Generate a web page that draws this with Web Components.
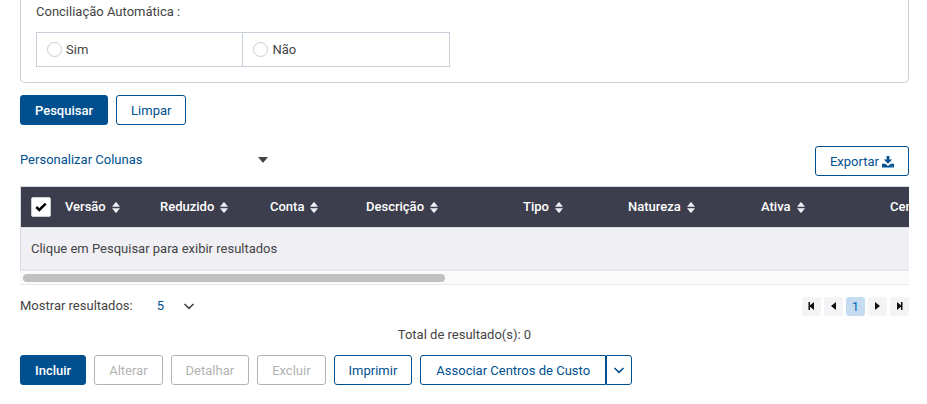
<!DOCTYPE html>
<html lang="pt-BR">
<head>
<meta charset="utf-8">
<title>Plano de Contas</title>
<style>
  body { margin: 0; background: #fff; color: #444; font: 13px/20px Roboto, "Noto Sans", sans-serif;
    --blue: #00508f; --line: #c9cfd9; --muted: #b3b3b3; }
</style>
</head>
<body>
<account-page></account-page>
<script>
const define = (name, html, setup) => {
  const tpl = document.createElement('template');
  tpl.innerHTML = '<style>*{box-sizing:border-box}</style>' + html;
  customElements.define(name, class extends HTMLElement {
    constructor() {
      super();
      this.attachShadow({ mode: 'open' }).append(tpl.content.cloneNode(true));
    }
    connectedCallback() { if (setup) setup(this, this.shadowRoot); }
  });
};

define('action-button', `
<style>
  :host { display: inline-flex; }
  button { height: 30px; padding: 2px 14px 0; border: 1px solid var(--blue); border-radius: 3px; background: #fff;
    color: var(--blue); font: inherit; display: flex; align-items: center; gap: 3px; white-space: nowrap; cursor: pointer; }
  :host([primary]) button { background: var(--blue); color: #fff; font-weight: 500; }
  :host([group=start]) button { border-radius: 3px 0 0 3px; padding: 2px 15px 0; }
  :host([group=end]) button { border-radius: 0 3px 3px 0; padding: 0 6px; }
  button:disabled { border-color: var(--muted); color: var(--muted); cursor: default; }
</style>
<button type="button"><slot></slot></button>`, (el, root) => {
  const b = root.querySelector('button');
  b.disabled = el.hasAttribute('disabled');
  if (el.hasAttribute('label')) b.setAttribute('aria-label', el.getAttribute('label'));
});

define('radio-option', `
<style>
  :host { display: block; flex: 1; }
  :host(:not(:first-child)) { border-left: 1px solid var(--line); }
  label { display: flex; align-items: center; gap: 4px; height: 33px; padding: 0 10px; cursor: pointer; }
  input { appearance: none; width: 15px; height: 15px; margin: 0; border: 1px solid #ccc; border-radius: 50%; background: #fff; }
  input:checked { border: 4px solid var(--blue); }
</style>
<label><input type="radio" name="conciliacao"><slot></slot></label>`);

define('drop-select', `
<style>
  :host { display: inline-grid; grid-template: 30px / 1fr; align-items: center; }
  select, svg { grid-area: 1 / 1; }
  select { appearance: none; border: 0; padding: 0; margin: 0; width: 100%; height: 30px; background: none; color: var(--blue); font: inherit; cursor: pointer; }
  svg { justify-self: end; pointer-events: none; display: none; }
  :host([icon=caret]) .caret, :host([icon=chevron]) .chevron { display: block; }
</style>
<select></select>
<svg class="caret" width="10" height="6" viewBox="0 0 10 6"><path d="M0 0h10L5.600 5.300q-.6.600-1.200 0z" fill="#444"/></svg>
<svg class="chevron" width="12" height="7" viewBox="0 0 12 7"><path d="M1.500 1 6 5.400 10.500 1" fill="none" stroke="#444" stroke-width="1.600"/></svg>`,
(el, root) => {
  const s = root.querySelector('select');
  s.setAttribute('aria-label', el.getAttribute('label'));
  s.replaceChildren(new Option(el.getAttribute('value')));
});

define('search-panel', `
<style>
  :host { display: block; }
  fieldset { margin: 0; min-width: 0; border: 1px solid var(--line); border-top: 0; border-radius: 0 0 5px 5px; padding: 2px 15px 15px; }
  .group { display: flex; width: 48.300%; margin-top: 10px; border: 1px solid var(--line); }
</style>
<fieldset aria-labelledby="name">
  <div id="name">Conciliação Automática :</div>
  <div class="group"><radio-option>Sim</radio-option><radio-option>Não</radio-option></div>
</fieldset>`);

define('sort-header', `
<style>
  :host { display: block; }
  button { display: flex; align-items: center; gap: 6px; border: 0; padding: 0; background: none; color: #fff; font: inherit; font-weight: 500; white-space: nowrap; cursor: pointer; }
</style>
<button type="button"><slot></slot><svg width="8" height="11" viewBox="0 0 8 11" fill="#eeeef4"><path d="M0 4.700 3.400.600q.6-.6 1.200 0L8 4.700zM0 6.300h8L4.600 10.400q-.6.600-1.200 0z"/></svg></button>`);

define('result-table', `
<style>
  :host { display: block; }
  .view { overflow: hidden; border: 1px solid #d9dbe2; border-width: 1px 0 0 1px; }
  table { width: 1864px; table-layout: fixed; border-collapse: separate; border-spacing: 0; }
  th { height: 40px; padding: 0 0 0 10px; background: #3c3e4e; text-align: left; }
  td { height: 44px; padding: 0 10px; background: #f0eff4; border-top: 1px solid #d9dbe2; border-bottom: 2px solid #e7e7eb; }
  label { display: grid; width: 20px; height: 20px; place-items: center; }
  input, label svg { grid-area: 1 / 1; }
  input { appearance: none; width: 20px; height: 20px; margin: 0; border: 1px solid #ccc; border-radius: 2px; background: #fff; }
  label svg { pointer-events: none; visibility: hidden; z-index: 1; }
  input:checked + svg { visibility: visible; }
  .track { height: 14px; padding: 3px; background: #fafafa; border-bottom: 1px solid #e8e8e8; }
  .thumb { width: 47.800%; height: 8px; border-radius: 4px; background: #c1c1c1; }
</style>
<div class="view"><table>
  <colgroup></colgroup>
  <thead><tr><th scope="col"><label><input type="checkbox" checked aria-label="Selecionar todos"><svg width="12" height="10" viewBox="0 0 12 10"><path d="m1.300 5 3 3 6.400-6.400" fill="none" stroke="#000" stroke-width="2.500"/></svg></label></th></tr></thead>
  <tbody><tr><td colspan="9">Clique em Pesquisar para exibir resultados</td></tr></tbody>
</table></div>
<div class="track"><div class="thumb"></div></div>`, (el, root) => {
  const columns = [['Versão', 95], ['Reduzido', 110], ['Conta', 96], ['Descrição', 157], ['Tipo', 105], ['Natureza', 133], ['Ativa', 129], ['Centro de Custo', 1005]];
  const row = root.querySelector('thead tr'), group = root.querySelector('colgroup');
  const addCol = w => { const c = document.createElement('col'); c.style.width = w + 'px'; group.append(c); };
  addCol(34);
  for (const [name, width] of columns) {
    addCol(width);
    const th = document.createElement('th'), sort = document.createElement('sort-header');
    th.scope = 'col'; sort.textContent = name; th.append(sort); row.append(th);
  }
});

define('page-nav', `
<style>
  :host { display: block; }
  nav { display: flex; gap: 3px; }
  button { width: 19px; height: 19px; padding: 0; border: 0; border-radius: 3px; background: #f4f4f6; color: #111; font: inherit; line-height: 19px; display: grid; place-items: center; cursor: pointer; }
  button[aria-current] { background: #c5dcf0; color: #0068b4; }
  svg { fill: currentColor; }
</style>
<nav aria-label="Paginação">
  <button type="button" aria-label="Primeira"><svg width="7" height="8" viewBox="0 0 7 8"><path d="M0.500 0h1.500v3.300L6 0v8L2 4.700V8H.5z"/></svg></button>
  <button type="button" aria-label="Anterior"><svg width="7" height="8" viewBox="0 0 7 8"><path d="M6 0v8L1 4z"/></svg></button>
  <button type="button" aria-current="page">1</button>
  <button type="button" aria-label="Próxima"><svg width="7" height="8" viewBox="0 0 7 8"><path d="M1 0v8l5-4z"/></svg></button>
  <button type="button" aria-label="Última"><svg width="7" height="8" viewBox="0 0 7 8"><path d="M6.500 0H5v3.300L1 0v8L5 4.700V8h1.500z"/></svg></button>
</nav>`);

define('account-page', `
<style>
  :host { display: block; padding: 0 18px 0 20px; }
  .row { display: flex; align-items: center; gap: 8px; }
  .search { margin-top: 12px; }
  .tools { margin-top: 20px; justify-content: space-between; align-items: flex-end; }
  result-table { margin-top: 10px; }
  .columns { width: 248px; padding-bottom: 1px; }
  .pager { margin-top: 6px; justify-content: space-between; }
  .size { display: flex; align-items: center; gap: 24px; }
  .size drop-select { width: 38px; }
  .total { text-align: center; margin-top: 4px; }
  .actions { margin-top: 10px; }
  .split { display: flex; }
</style>
<search-panel></search-panel>
<div class="row search"><action-button primary>Pesquisar</action-button><action-button>Limpar</action-button></div>
<div class="row tools">
  <drop-select class="columns" icon="caret" label="Colunas" value="Personalizar Colunas"></drop-select>
  <action-button>Exportar <svg width="12" height="12" viewBox="0 0 12 12" fill="currentColor"><path d="M4.600 0h2.800v3.500h2.800L6 7.700 1.800 3.500h2.800zM0 7.700h3.200L6 9.900l2.800-2.200H12V11q0 .6-.6.600H.6Q0 11.600 0 11z"/><path d="M8.500 10.200h.7M10 10.200h.7" stroke="#fff" stroke-width=".6"/></svg></action-button>
</div>
<result-table></result-table>
<div class="row pager">
  <div class="size"><span>Mostrar resultados:</span><drop-select icon="chevron" label="Mostrar resultados" value="5"></drop-select></div>
  <page-nav></page-nav>
</div>
<div class="total">Total de resultado(s): 0</div>
<div class="row actions">
  <action-button primary>Incluir</action-button>
  <action-button disabled>Alterar</action-button>
  <action-button disabled>Detalhar</action-button>
  <action-button disabled>Excluir</action-button>
  <action-button>Imprimir</action-button>
  <div class="split"><action-button group="start">Associar Centros de Custo</action-button><action-button group="end" label="Mais opções"><svg width="12" height="7" viewBox="0 0 12 7"><path d="M1.500 1 6 5.400 10.500 1" fill="none" stroke="currentColor" stroke-width="1.600"/></svg></action-button></div>
</div>`);
</script>
</body>
</html>
